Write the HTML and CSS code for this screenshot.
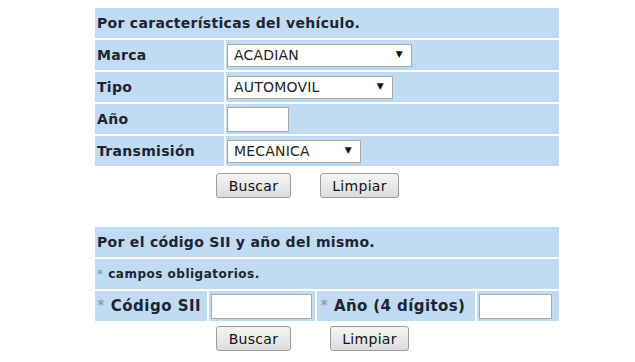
FILE: index.html
```html
<!DOCTYPE html>
<html lang="es">
<head>
  <meta charset="UTF-8">
  <title>Búsqueda de vehículo</title>
  <link rel="stylesheet" href="styles.css">
</head>
<body>
  <div class="page">
    <form class="search" id="formCaracteristicas">
      <table class="grid">
        <tr>
          <td class="title" colspan="2">Por características del vehículo.</td>
        </tr>
        <tr>
          <td class="label">Marca</td>
          <td class="field">
            <span class="combo" style="width:185px">
              <select>
                <option>ACADIAN</option>
              </select>
            </span>
          </td>
        </tr>
        <tr>
          <td class="label">Tipo</td>
          <td class="field">
            <span class="combo" style="width:166px">
              <select>
                <option>AUTOMOVIL</option>
              </select>
            </span>
          </td>
        </tr>
        <tr>
          <td class="label">Año</td>
          <td class="field"><input type="text" class="box" style="width:62px"></td>
        </tr>
        <tr>
          <td class="label">Transmisión</td>
          <td class="field">
            <span class="combo" style="width:134px">
              <select>
                <option>MECANICA</option>
              </select>
            </span>
          </td>
        </tr>
      </table>
      <div class="actions">
        <button type="submit" class="btn" style="width:75px">Buscar</button>
        <button type="reset" class="btn" style="width:79px">Limpiar</button>
      </div>
    </form>

    <form class="search second" id="formCodigo">
      <table class="grid">
        <tr>
          <td class="title" colspan="4">Por el código SII y año del mismo.</td>
        </tr>
        <tr>
          <td class="note" colspan="4"><span class="star">*</span> campos obligatorios.</td>
        </tr>
        <tr>
          <td class="label code-label"><span class="star">*</span> Código SII</td>
          <td class="field code-field"><input type="text" class="box" style="width:101px"></td>
          <td class="label year-label"><span class="star">*</span> Año (4 dígitos)</td>
          <td class="field year-field"><input type="text" class="box" style="width:73px"></td>
        </tr>
      </table>
      <div class="actions wide">
        <button type="submit" class="btn" style="width:75px">Buscar</button>
        <button type="reset" class="btn" style="width:79px">Limpiar</button>
      </div>
    </form>
  </div>
</body>
</html>
```

FILE: styles.css
```css
body {
    margin: 0;
    background-color: #fff;
    font-family: Verdana, "DejaVu Sans", sans-serif;
    color: #1c2433;
}

.page {
    padding: 6px 0 0 93px;
}

.search {
    margin: 0;
}

.second {
    margin-top: 27px;
}

.grid {
    border-collapse: separate;
    border-spacing: 2px;
    width: 468px;
}

.grid td {
    background-color: #c1dbf2;
    padding: 0 2px;
    height: 30px;
    vertical-align: middle;
    font-size: 14px;
    font-weight: bold;
    letter-spacing: 0.3px;
    white-space: nowrap;
}

.grid .label {
    width: 125px;
}

.grid .field {
    padding-left: 1px;
}

.grid .note {
    font-size: 12px;
    letter-spacing: 0.5px;
}

.grid .code-label {
    width: 108px;
    font-size: 15px;
    letter-spacing: 0.5px;
}

.grid .code-field {
    width: 103px;
    padding: 0 2px;
}

.grid .year-label {
    width: 154px;
    padding-left: 3px;
    font-size: 15px;
    letter-spacing: 0.4px;
}

.grid .year-field {
    width: 78px;
    padding-left: 2px;
}

.star {
    color: #8a8f99;
    font-weight: normal;
}

.combo {
    position: relative;
    display: inline-block;
    vertical-align: middle;
}

.combo select {
    appearance: none;
    -webkit-appearance: none;
    width: 100%;
    height: 23px;
    margin: 0;
    padding: 0 0 0 6px;
    border: 1px solid #a9a9a9;
    border-radius: 0;
    background-color: #fff;
    font-family: "DejaVu Sans", Verdana, sans-serif;
    font-size: 14px;
    letter-spacing: 0.2px;
    color: #222;
}

.combo::after {
    content: "\25BC";
    position: absolute;
    right: 9px;
    top: 5px;
    font-size: 9px;
    color: #111;
    pointer-events: none;
}

.box {
    height: 25px;
    margin: 0;
    padding: 0 3px;
    border: 1px solid #a9a9a9;
    box-sizing: border-box;
    background-color: #fff;
    vertical-align: middle;
}

.actions {
    display: flex;
    gap: 29px;
    padding: 5px 0 0 123px;
}

.actions.wide {
    gap: 39px;
    padding-top: 3px;
}

.btn {
    height: 25px;
    margin: 0;
    padding: 0;
    border: 1px solid #9b9b9b;
    border-radius: 3px;
    background: linear-gradient(#f6f6f6, #dcdcdc);
    font-family: Verdana, "DejaVu Sans", sans-serif;
    font-size: 14px;
    letter-spacing: 0.3px;
    color: #111;
    cursor: pointer;
}

.btn:hover {
    background: linear-gradient(#eaf4fc, #d4e6f5);
}
```
